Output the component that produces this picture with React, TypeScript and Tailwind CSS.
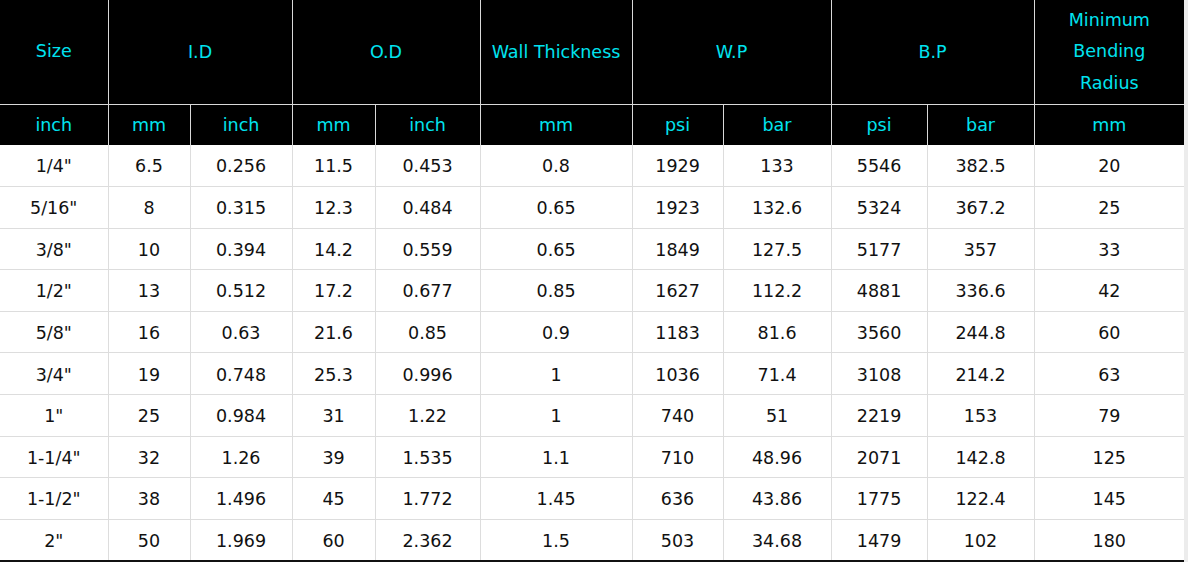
import React from 'react';

const rows = [
  ['1/4"', '6.5', '0.256', '11.5', '0.453', '0.8', '1929', '133', '5546', '382.5', '20'],
  ['5/16"', '8', '0.315', '12.3', '0.484', '0.65', '1923', '132.6', '5324', '367.2', '25'],
  ['3/8"', '10', '0.394', '14.2', '0.559', '0.65', '1849', '127.5', '5177', '357', '33'],
  ['1/2"', '13', '0.512', '17.2', '0.677', '0.85', '1627', '112.2', '4881', '336.6', '42'],
  ['5/8"', '16', '0.63', '21.6', '0.85', '0.9', '1183', '81.6', '3560', '244.8', '60'],
  ['3/4"', '19', '0.748', '25.3', '0.996', '1', '1036', '71.4', '3108', '214.2', '63'],
  ['1"', '25', '0.984', '31', '1.22', '1', '740', '51', '2219', '153', '79'],
  ['1-1/4"', '32', '1.26', '39', '1.535', '1.1', '710', '48.96', '2071', '142.8', '125'],
  ['1-1/2"', '38', '1.496', '45', '1.772', '1.45', '636', '43.86', '1775', '122.4', '145'],
  ['2"', '50', '1.969', '60', '2.362', '1.5', '503', '34.68', '1479', '102', '180'],
];

const widths = [108, 82, 102, 83, 105, 152, 91, 108, 96, 107, 150];
const units = ['inch', 'mm', 'inch', 'mm', 'inch', 'mm', 'psi', 'bar', 'psi', 'bar', 'mm'];

const App = () => {
  return (
    <div className="flex w-[1188px] h-[562px] bg-white overflow-hidden" style={{ fontFamily: '"DejaVu Sans", sans-serif' }}>
      <table className="w-[1184px] table-fixed border-collapse text-[17.5px] text-center">
        <colgroup>
          {widths.map((w, i) => (
            <col key={i} style={{ width: w }} />
          ))}
        </colgroup>
        <thead className="bg-black text-[#00e3ef]">
          <tr className="h-[104px]">
            <th className="font-normal leading-[31px] border-r border-b border-[#d9d9d9]">Size</th>
            <th colSpan={2} className="font-normal border-r border-b border-[#d9d9d9]">I.D</th>
            <th colSpan={2} className="font-normal border-r border-b border-[#d9d9d9]">O.D</th>
            <th className="font-normal border-r border-b border-[#d9d9d9]">Wall Thickness</th>
            <th colSpan={2} className="font-normal border-r border-b border-[#d9d9d9]">W.P</th>
            <th colSpan={2} className="font-normal border-r border-b border-[#d9d9d9]">B.P</th>
            <th className="font-normal leading-[31.5px] border-b border-[#d9d9d9] px-6">Minimum Bending Radius</th>
          </tr>
          <tr className="h-[41px]">
            {units.map((u, i) => (
              <th key={i} className={`font-normal pt-[1px] ${i < 10 ? 'border-r' : ''} border-[#d9d9d9]`}>
                {u}
              </th>
            ))}
          </tr>
        </thead>
        <tbody className="text-[#111111]">
          {rows.map((r, ri) => (
            <tr key={ri} className={`h-[41.5px] ${ri === rows.length - 1 ? 'border-b-2 border-b-[#111111]' : 'border-b border-[#dddddd]'}`}>
              {r.map((c, ci) => (
                <td key={ci} className={`pt-[2px] ${ci < 10 ? 'border-r border-r-[#dddddd]' : ''}`}>
                  {c}
                </td>
              ))}
            </tr>
          ))}
        </tbody>
      </table>
      <div className="w-1 h-full bg-[#ececec]" />
    </div>
  );
};

export default App;
